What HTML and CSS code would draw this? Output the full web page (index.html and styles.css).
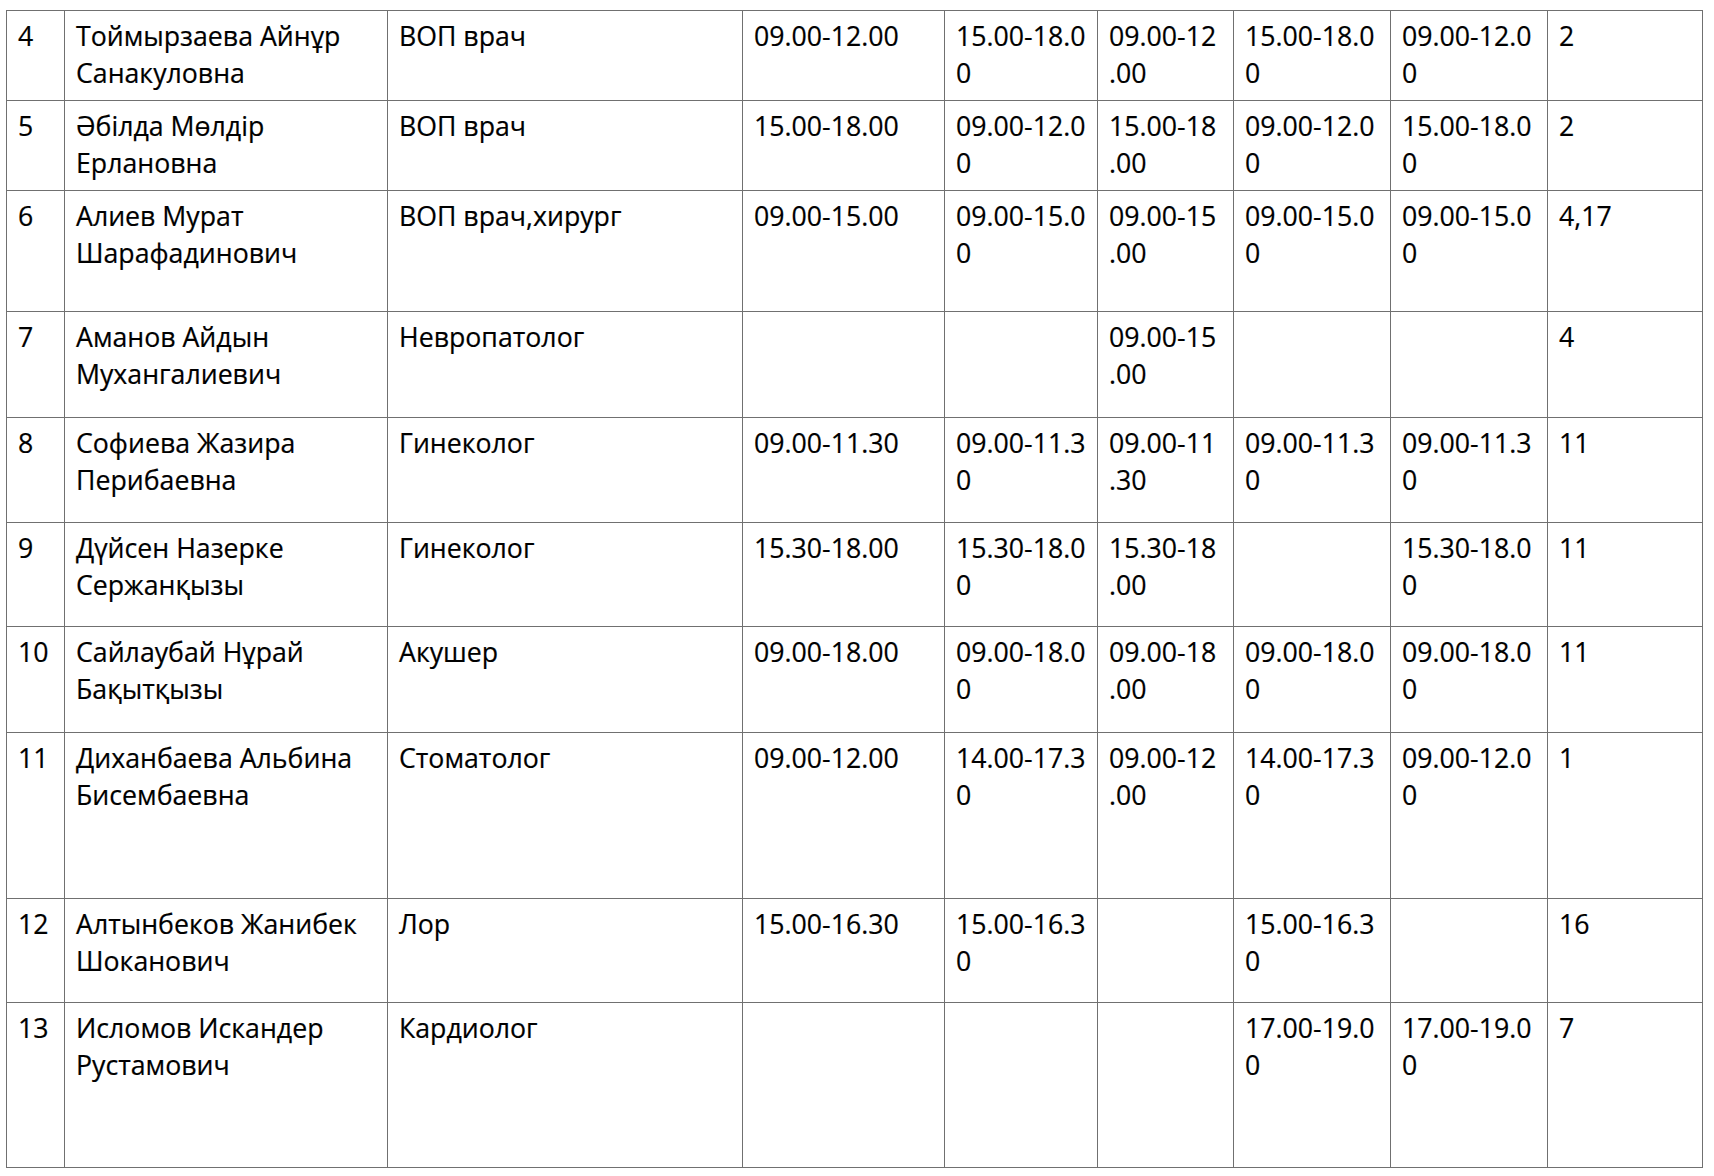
FILE: index.html
```html
<!DOCTYPE html>
<html lang="ru">
<head>
<meta charset="utf-8">
<title>График приёма врачей</title>
<link rel="stylesheet" href="styles.css">
</head>
<body>
<table class="schedule">
  <colgroup>
    <col class="c-num">
    <col class="c-name">
    <col class="c-spec">
    <col class="c-mon">
    <col class="c-tue">
    <col class="c-wed">
    <col class="c-thu">
    <col class="c-fri">
    <col class="c-room">
  </colgroup>
  <tbody>
    <tr class="r90">
      <td>4</td><td>Тоймырзаева Айнұр Санакуловна</td><td>ВОП врач</td>
      <td>09.00-12.00</td><td>15.00-18.0<br>0</td><td>09.00-12<br>.00</td><td>15.00-18.0<br>0</td><td>09.00-12.0<br>0</td><td>2</td>
    </tr>
    <tr class="r90">
      <td>5</td><td>Әбілда Мөлдір Ерлановна</td><td>ВОП врач</td>
      <td>15.00-18.00</td><td>09.00-12.0<br>0</td><td>15.00-18<br>.00</td><td>09.00-12.0<br>0</td><td>15.00-18.0<br>0</td><td>2</td>
    </tr>
    <tr class="r121">
      <td>6</td><td>Алиев Мурат Шарафадинович</td><td>ВОП врач,хирург</td>
      <td>09.00-15.00</td><td>09.00-15.0<br>0</td><td>09.00-15<br>.00</td><td>09.00-15.0<br>0</td><td>09.00-15.0<br>0</td><td>4,17</td>
    </tr>
    <tr class="r106">
      <td>7</td><td>Аманов Айдын Мухангалиевич</td><td>Невропатолог</td>
      <td></td><td></td><td>09.00-15<br>.00</td><td></td><td></td><td>4</td>
    </tr>
    <tr class="r105">
      <td>8</td><td>Софиева Жазира Перибаевна</td><td>Гинеколог</td>
      <td>09.00-11.30</td><td>09.00-11.3<br>0</td><td>09.00-11<br>.30</td><td>09.00-11.3<br>0</td><td>09.00-11.3<br>0</td><td>11</td>
    </tr>
    <tr class="r104">
      <td>9</td><td>Дүйсен Назерке Сержанқызы</td><td>Гинеколог</td>
      <td>15.30-18.00</td><td>15.30-18.0<br>0</td><td>15.30-18<br>.00</td><td></td><td>15.30-18.0<br>0</td><td>11</td>
    </tr>
    <tr class="r106">
      <td>10</td><td>Сайлаубай Нұрай Бақытқызы</td><td>Акушер</td>
      <td>09.00-18.00</td><td>09.00-18.0<br>0</td><td>09.00-18<br>.00</td><td>09.00-18.0<br>0</td><td>09.00-18.0<br>0</td><td>11</td>
    </tr>
    <tr class="r166">
      <td>11</td><td>Диханбаева Альбина Бисембаевна</td><td>Стоматолог</td>
      <td>09.00-12.00</td><td>14.00-17.3<br>0</td><td>09.00-12<br>.00</td><td>14.00-17.3<br>0</td><td>09.00-12.0<br>0</td><td>1</td>
    </tr>
    <tr class="r104">
      <td>12</td><td>Алтынбеков Жанибек Шоканович</td><td>Лор</td>
      <td>15.00-16.30</td><td>15.00-16.3<br>0</td><td></td><td>15.00-16.3<br>0</td><td></td><td>16</td>
    </tr>
    <tr class="r165">
      <td>13</td><td>Исломов Искандер Рустамович</td><td>Кардиолог</td>
      <td></td><td></td><td></td><td>17.00-19.0<br>0</td><td>17.00-19.0<br>0</td><td>7</td>
    </tr>
  </tbody>
</table>
</body>
</html>
```

FILE: styles.css
```css
html, body {
  margin: 0;
  padding: 0;
  background: #ffffff;
}

body {
  padding: 10px 0 0 6px;
  font-family: "Open Sans", "Noto Sans", sans-serif;
  color: #000000;
}

.schedule {
  border-collapse: collapse;
  table-layout: fixed;
  width: 1697px;
  font-size: 26.7px;
  line-height: 37px;
  -webkit-text-stroke: 0.2px #000000;
}

.c-num  { width: 58px; }
.c-name { width: 323px; }
.c-spec { width: 355px; }
.c-mon  { width: 202px; }
.c-tue  { width: 153px; }
.c-wed  { width: 136px; }
.c-thu  { width: 157px; }
.c-fri  { width: 157px; }
.c-room { width: 155px; }

.schedule td {
  border: 1px solid #707070;
  padding: 6px 4px 0 11px;
  vertical-align: top;
  white-space: normal;
  overflow: hidden;
}

.schedule td:nth-child(1) {
  padding-left: 11px;
}

.r90  { height: 90px; }
.r104 { height: 104px; }
.r105 { height: 105px; }
.r106 { height: 106px; }
.r121 { height: 121px; }
.r165 { height: 165px; }
.r166 { height: 166px; }
```
